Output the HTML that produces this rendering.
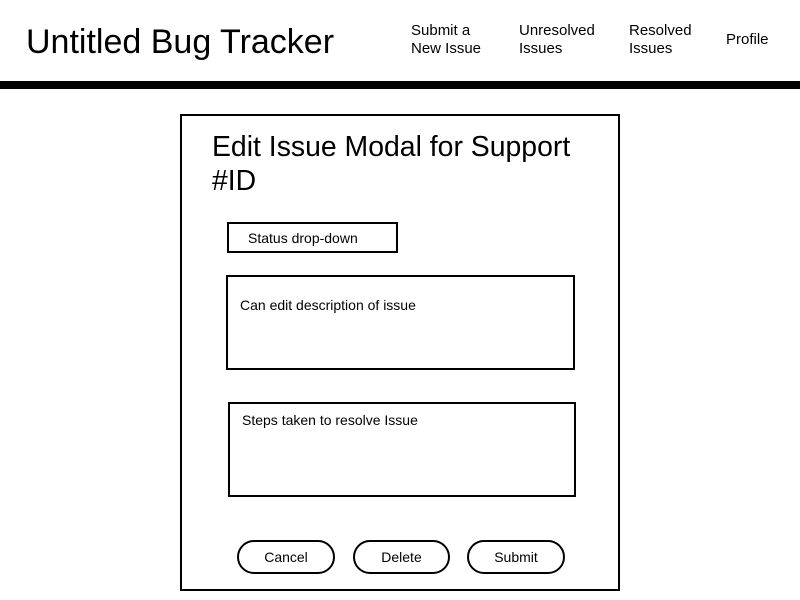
<!DOCTYPE html>
<html><head><style>
body{margin:0;width:800px;height:600px;position:relative;background:#fff;font-family:"Liberation Sans",Arial,sans-serif;color:#000;overflow:hidden}
.a{position:absolute}
.box{position:absolute;border:2px solid #000;box-sizing:border-box}
.nav{font-size:15px;line-height:18px}
.btn{position:absolute;border:2px solid #000;border-radius:17px;box-sizing:border-box;height:34px;top:540px;font-size:14px;text-align:center;line-height:30px}
</style></head><body>
<div class="a" style="left:26px;top:22px;font-size:34px;line-height:40px">Untitled Bug Tracker</div>
<div class="a nav" style="left:411px;top:22px">Submit a<br>New Issue</div>
<div class="a nav" style="left:519px;top:22px">Unresolved<br>Issues</div>
<div class="a nav" style="left:629px;top:22px">Resolved<br>Issues</div>
<div class="a nav" style="left:726px;top:31px">Profile</div>
<div class="a" style="left:0;top:81px;width:800px;height:8px;background:#000"></div>
<div class="box" style="left:180px;top:114px;width:440px;height:477px"></div>
<div class="a" style="left:212px;top:130px;font-size:28.4px;line-height:34px">Edit Issue Modal for Support<br>#ID</div>
<div class="box" style="left:227px;top:222px;width:171px;height:31px;font-size:14px;padding:6px 0 0 19px">Status drop-down</div>
<div class="box" style="left:226px;top:275px;width:349px;height:95px;font-size:14px;padding:20px 0 0 12px">Can edit description of issue</div>
<div class="box" style="left:228px;top:402px;width:348px;height:95px;font-size:14px;padding:8px 0 0 12px">Steps taken to resolve Issue</div>
<div class="btn" style="left:237px;width:98px">Cancel</div>
<div class="btn" style="left:353px;width:97px">Delete</div>
<div class="btn" style="left:467px;width:98px">Submit</div>
</body></html>
